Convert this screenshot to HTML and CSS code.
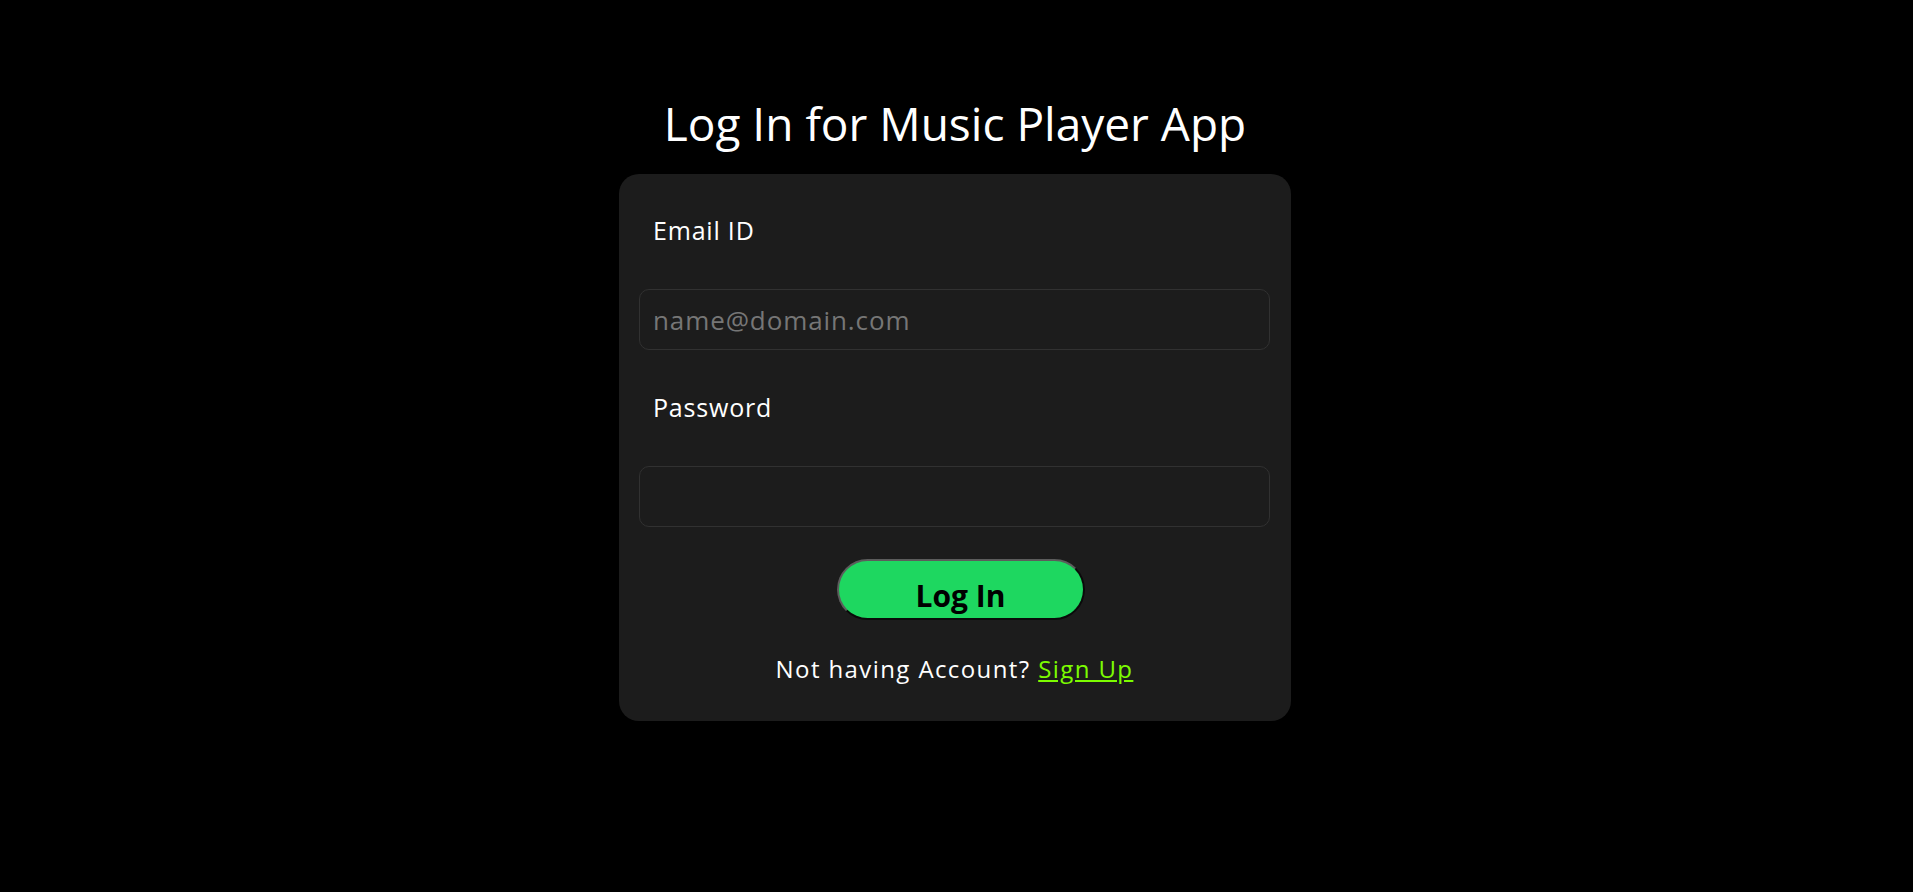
FILE: index.html
```html
<!DOCTYPE html>
<html lang="en">
<head>
<meta charset="utf-8">
<title>Log In for Music Player App</title>
<link rel="stylesheet" href="styles.css">
</head>
<body>
<main class="page">
  <h1 class="title">Log In for Music Player App</h1>
  <form class="card">
    <label class="label" for="email">Email ID</label>
    <input class="field" id="email" type="email" placeholder="name@domain.com">
    <label class="label" for="password">Password</label>
    <input class="field" id="password" type="password">
    <div class="actions">
      <button class="btn" type="button">Log In</button>
    </div>
    <p class="footer">Not having Account? <a class="link" href="#">Sign Up</a></p>
  </form>
</main>
</body>
</html>
```
FILE: styles.css
```css
html, body {
  margin: 0;
  padding: 0;
  background: #000;
}
body {
  font-family: "Open Sans", "Liberation Sans", sans-serif;
  color: #fff;
}
.page {
  display: flex;
  flex-direction: column;
  align-items: center;
  padding-top: 93px;
  padding-right: 3px;
}
.title {
  margin: 0 0 21px;
  font-size: 46px;
  font-weight: 400;
  line-height: 60px;
  color: #fff;
}
.card {
  box-sizing: border-box;
  width: 672px;
  background: #1c1c1c;
  border-radius: 20px;
  padding: 38px 21px 36px 20px;
  display: flex;
  flex-direction: column;
}
.label {
  display: block;
  padding-left: 14px;
  font-size: 25px;
  letter-spacing: 0.8px;
  line-height: 36px;
  margin-bottom: 41px;
  color: #fff;
}
.field {
  box-sizing: border-box;
  width: 100%;
  height: 61px;
  margin: 0 0 39px;
  padding: 0 13px;
  border: 1px solid #313131;
  border-radius: 10px;
  background: #1c1c1c;
  color: #fff;
  font-family: inherit;
  font-size: 26px;
  letter-spacing: 0.9px;
  outline: none;
}
.field::placeholder {
  color: #767676;
}
#password {
  margin-bottom: 32px;
}
.actions {
  display: flex;
  justify-content: center;
  padding-left: 12px;
}
.btn {
  box-sizing: border-box;
  width: 248px;
  height: 61px;
  padding: 13px 0 0;
  border: 2px solid;
  border-color: #5c5c5c #0a0a0a #0a0a0a #5c5c5c;
  border-radius: 31px;
  background: #1ed760;
  color: #000;
  font-family: inherit;
  font-size: 30px;
  font-weight: 700;
  line-height: 44px;
  cursor: pointer;
}
.footer {
  margin: 33px 0 0;
  text-align: center;
  font-size: 24px;
  letter-spacing: 1.4px;
  line-height: 32px;
  color: #fff;
}
.link {
  color: #7cfc00;
  text-decoration: underline;
}
```
